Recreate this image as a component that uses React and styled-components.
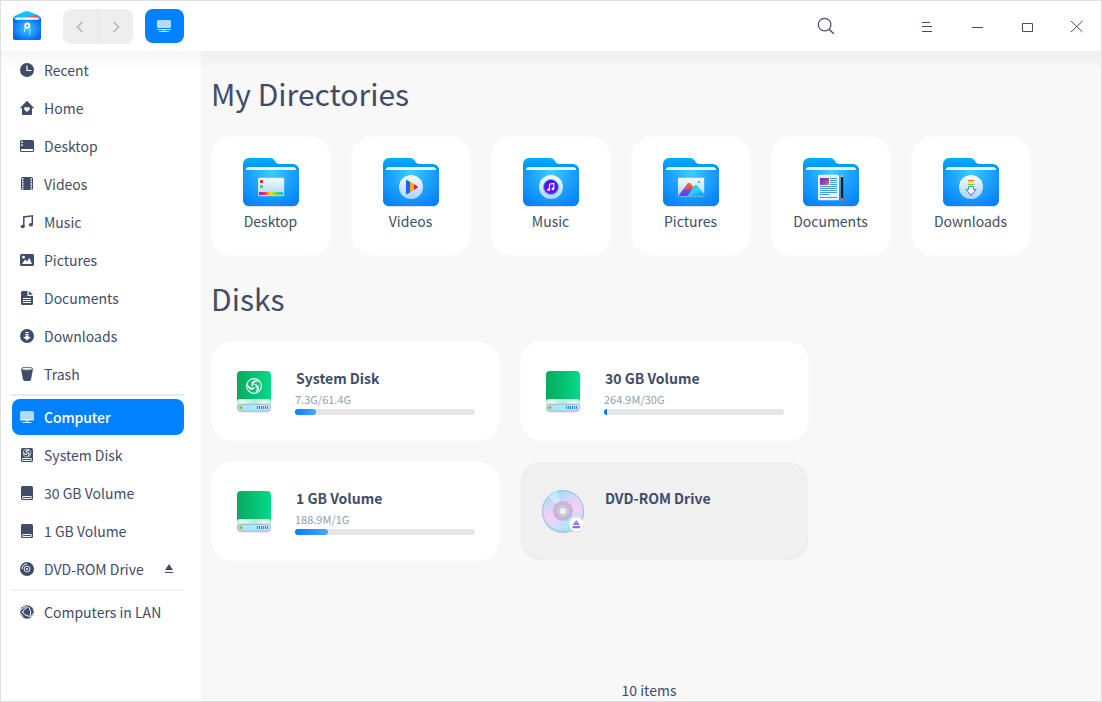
import React from "react";
import styled, { createGlobalStyle, css } from "styled-components";

const INK = "#414d68";
const BLUE = "#0081ff";

const GlobalStyle = createGlobalStyle`
  *, *::before, *::after { box-sizing: border-box; }
  body {
    margin: 0;
    color: ${INK};
    font-family: "Noto Sans CJK SC", "Noto Sans", sans-serif;
    font-size: 14px;
  }
  svg { display: block; }
`;

const Window = styled.div`
  display: flex;
  flex-direction: column;
  width: 1102px;
  height: 702px;
  border: 1px solid #dfdfdf;
  background: #f8f8f8;
  overflow: hidden;
`;

const TitleBar = styled.header`
  position: relative;
  z-index: 1;
  flex: none;
  display: flex;
  align-items: center;
  height: 50px;
  padding: 0 16px 0 11px;
  background: #fff;

  &::after {
    content: "";
    position: absolute;
    left: 0;
    right: 0;
    top: 100%;
    height: 20px;
    background: linear-gradient(rgba(0, 0, 0, 0.035), rgba(0, 0, 0, 0));
    pointer-events: none;
  }
`;

const NavGroup = styled.div`
  display: flex;
  width: 70px;
  height: 35px;
  margin: 1px 0 0 20px;
  border-radius: 8px;
  background: #eeeeee;
  overflow: hidden;
`;

const NavButton = styled.button`
  flex: 1;
  display: flex;
  align-items: center;
  justify-content: center;
  padding: 0;
  border: 0;
  background: none;
  & + & { border-left: 1px solid #e8e8e8; }
`;

const LocationButton = styled.button`
  display: flex;
  align-items: center;
  justify-content: center;
  width: 39px;
  height: 34px;
  margin-left: 12px;
  padding: 0 1px 0 0;
  border: 0;
  border-radius: 8px;
  background: ${BLUE};
`;

const SearchButton = styled.button`
  margin-left: auto;
  margin-right: 84px;
  padding: 0;
  border: 0;
  background: none;
`;

const WindowControls = styled.div`
  display: flex;
  gap: 34px;
`;

const Control = styled.button`
  width: 16px;
  height: 16px;
  padding: 0;
  border: 0;
  background: none;
`;

const Body = styled.div`
  flex: 1;
  display: flex;
  min-height: 0;
`;

const Sidebar = styled.nav`
  flex: none;
  display: flex;
  flex-direction: column;
  width: 200px;
  padding: 1px 17px 0 11px;
  background: #fff;
`;

const SideList = styled.ul`
  display: flex;
  flex-direction: column;
  gap: 2px;
  margin: 0;
  padding: 0;
  list-style: none;
`;

const SideItem = styled.li`
  display: flex;
  align-items: center;
  gap: 9px;
  height: 36px;
  padding: 0 7px 0 7px;
  border-radius: 8px;
  line-height: 36px;
  white-space: nowrap;
  ${(p) =>
    p.$active &&
    css`
      background: ${BLUE};
      color: #fff;
      font-weight: 500;
      letter-spacing: -0.1px;
    `}
`;

const SideLabel = styled.span`
  flex: 1;
`;

const Separator = styled.hr`
  width: 173px;
  height: 2px;
  margin: ${(p) => p.$margin};
  border: 0;
  background: ${(p) => p.$color};
`;

const Main = styled.main`
  flex: 1;
  display: flex;
  flex-direction: column;
  padding: 17px 0 0 11px;
`;

const Heading = styled.h1`
  height: 50px;
  margin: ${(p) => p.$top || 0}px 0 19px -1px;
  font-size: 30px;
  font-weight: 400;
  line-height: 50px;
`;

const DirectoryRow = styled.div`
  display: flex;
  gap: 22px;
`;

const DirectoryCard = styled.div`
  display: flex;
  flex-direction: column;
  align-items: center;
  width: 118px;
  height: 118px;
  padding-top: 21px;
  border-radius: 20px;
  background: #fff;
  box-shadow: 0 0 0 1px rgba(255, 255, 255, 0.4);
`;

const DirectoryName = styled.span`
  margin-right: 1px;
  line-height: 22px;
`;

const DiskGrid = styled.div`
  display: grid;
  grid-template-columns: repeat(2, 287px);
  grid-auto-rows: 98px;
  gap: 22px;
`;

const DiskCard = styled.div`
  display: flex;
  padding: 25px 0 0 18px;
  border-radius: 20px;
  background: ${(p) => (p.$muted ? "#f0f0f0" : "#fff")};
  box-shadow: ${(p) => (p.$muted ? "inset 0 0 0 1px #ececec" : "0 0 0 1px rgba(255, 255, 255, 0.4)")};
`;

const DiskInfo = styled.div`
  display: flex;
  flex-direction: column;
  margin: -1px 0 0 17px;
`;

const DiskName = styled.span`
  margin-left: 1px;
  font-weight: 700;
  line-height: 24px;
`;

const DiskUsage = styled.span`
  font-size: 11px;
  line-height: 16px;
  margin-top: 1px;
  color: #8aa1b4;
`;

const Meter = styled.div`
  width: 180px;
  height: 6px;
  margin-top: 2px;
  border-radius: 3px;
  background: #e5e5e5;
  overflow: hidden;
`;

const MeterFill = styled.div`
  height: 100%;
  border-radius: ${(p) => (p.$tiny ? "0" : "0 3px 3px 0")};
  background: ${(p) => (p.$tiny ? BLUE : `linear-gradient(90deg, ${BLUE}, #4aa5ff)`)};
`;

const StatusBar = styled.footer`
  margin: auto 0 -1px -11px;
  padding-right: 4px;
  line-height: 24px;
  text-align: center;
`;

/* ---------- title bar drawings ---------- */

const AppLogo = () => (
  <svg width="31" height="32" viewBox="0 0 31 32">
    <defs>
      <linearGradient id="lgBack" x1="0" y1="0" x2="0" y2="1">
        <stop offset="0" stopColor="#12d0ff" />
        <stop offset="1" stopColor="#0a8cf5" />
      </linearGradient>
      <radialGradient id="lgFront" cx=".5" cy=".5" r=".65">
        <stop offset="0" stopColor="#3fc4ff" />
        <stop offset=".6" stopColor="#1489ff" />
        <stop offset="1" stopColor="#0651ec" />
      </radialGradient>
      <linearGradient id="lgRed" x1="0" x2="1">
        <stop offset="0" stopColor="#ff8a9e" />
        <stop offset="1" stopColor="#f5365c" />
      </linearGradient>
    </defs>
    <path d="M1 9.500Q1 6.500 3.500 5.400L12.500 1.600Q15 .6 17.500 1.600L26.500 5.400Q29 6.500 29 9.500V20H1Z" fill="url(#lgBack)" />
    <path d="M3 8.500L24 5.200Q26.300 5 26.700 7V10H3Z" fill="url(#lgRed)" />
    <path d="M3 9.500Q3 7.500 5.500 7.500H24.500Q27 7.500 27 9.500V12H3Z" fill="#fff" />
    <path d="M1 7.500Q1.500 9.700 4 9.700H26Q28.500 9.700 29 7.500V27.500Q29 30 26.500 30H3.500Q1 30 1 27.500Z" fill="url(#lgFront)" />
    <path d="M12.700 17.500V22" stroke="#bfe6ff" strokeWidth="1.200" />
    <path d="M17.800 18V25" stroke="#7fcaff" strokeWidth="1.500" />
    <circle cx="15.300" cy="15.600" r="2.100" fill="#2496ff" stroke="#fff" strokeWidth="1.900" />
  </svg>
);

const Chevron = ({ right }) => (
  <svg width="12" height="14" viewBox="0 0 12 14" fill="none" stroke="#b0b2bb" strokeWidth="1.400">
    <path d={right ? "M3.500 2 L8.700 7 L3.500 12" : "M8.500 2 L3.300 7 L8.500 12"} />
  </svg>
);

const ComputerIcon = () => (
  <svg width="16" height="16" viewBox="0 0 16 16">
    <path d="M1 3.500Q1 2 2.500 2H13.500Q15 2 15 3.500V10H1Z" fill="#fff" fillOpacity=".7" />
    <path d="M1 10H15V10.500Q15 11.500 14 11.500H2Q1 11.500 1 10.500Z" fill="#fff" fillOpacity=".85" />
    <path d="M6.500 11.500h3v1.300h-3zM3.500 13h9v1h-9z" fill="#fff" fillOpacity=".75" />
  </svg>
);

const SmallComputer = () => (
  <svg width="16" height="16" viewBox="0 0 16 16">
    <rect x="1" y="2" width="14" height="8" rx="1.300" fill="#fff" fillOpacity=".7" />
    <path d="M1 11.500H15M3 13.500H13" stroke="#fff" strokeOpacity=".75" />
    <path d="M6.500 12h3v1h-3z" fill="#fff" fillOpacity=".5" />
  </svg>
);

const SearchIcon = () => (
  <svg width="18" height="18" viewBox="0 0 18 18" fill="none" stroke={INK} strokeWidth="1.200">
    <circle cx="7.600" cy="7.600" r="6.300" />
    <path d="M12.200 12.200 L16.700 16.700" strokeWidth="1.400" />
  </svg>
);

const controlPaths = {
  menu: "M3 4.500h8M3 8.500h10M3 13.500h10",
  minimize: "M3 9.500h11",
  maximize: "M3.500 5.500h10v8h-10z",
  close: "M2 3 L13.500 14 M13.500 3 L2 14",
};

const ControlIcon = ({ name }) => (
  <svg width="16" height="16" viewBox="0 0 16 16" fill="none" stroke={INK} strokeWidth="1">
    <path d={controlPaths[name]} />
  </svg>
);

/* Three curved blades turning round a centre, inside a thin ring. */
const Swirl = ({ cx, cy, scale = 1 }) => (
  <g transform={`translate(${cx} ${cy}) scale(${scale})`} fill="#fff">
    <circle r="7.400" fill="none" stroke="#fff" strokeWidth="1.100" />
    {[0, 120, 240].map((angle) => (
      <path
        key={angle}
        transform={`rotate(${angle})`}
        d="M5.500 -4.800C0 -8 -5.500 -3.500 -.8 1.800C-2.600 -2.300 .5 -4.400 5.500 -4.800z"
      />
    ))}
  </g>
);

/* ---------- sidebar drawings ---------- */

const DiskGlyph = ({ swirl }) => (
  <>
    <path d="M2 2.500Q2 1 3.500 1h9Q14 1 14 2.500v11q0 1.500-1.500 1.500h-9Q2 15 2 13.500z" />
    <rect x="3.500" y="11.500" width="9" height="2" rx=".6" fill="none" stroke="#fff" strokeWidth="1" />
    {swirl && <Swirl cx={8} cy={6} scale={0.54} />}
  </>
);

const glyphs = {
  recent: (
    <>
      <circle cx="8" cy="8" r="7" />
      <path d="M8 3.500V8.500H12.500" fill="none" stroke="#fff" strokeWidth="1.200" />
    </>
  ),
  home: (
    <>
      <path d="M8 .8L15.300 8.200H13V14Q13 15 12 15H4Q3 15 3 14V8.200H.7z" />
      <path d="M8 12L5.300 9.400Q4.600 8 5.700 7.200Q7 6.600 8 7.800Q9 6.600 10.300 7.200Q11.400 8 10.700 9.400z" fill="#fff" />
    </>
  ),
  desktop: (
    <>
      <rect x="1" y="2" width="14" height="12" rx="1.500" />
      <path d="M2 11h12v1.300q0 .7-.7.7H2.700Q2 13 2 12.300zM2 3.500h2v1.300H2zM2 6.500h2v1.300H2z" fill="#fff" />
    </>
  ),
  videos: (
    <>
      <rect x="2" y="1" width="12" height="13" rx="1.500" />
      <path
        d="M3 3h1.500M3 5.500h1.500M3 8h1.500M3 10.500h1.500M3 12.800h1.500M11.500 3H13M11.500 5.500H13M11.500 8H13M11.500 10.500H13M11.500 12.800H13"
        stroke="#fff"
        strokeWidth="1.300"
      />
    </>
  ),
  music: (
    <>
      <path d="M4.800 12.500V3L13.300 1.800V10.500" fill="none" stroke={INK} strokeWidth="1.500" />
      <ellipse cx="3.700" cy="12.500" rx="2.100" ry="1.800" />
      <ellipse cx="11.900" cy="10.700" rx="2.100" ry="1.800" />
    </>
  ),
  pictures: (
    <>
      <rect x="1" y="2" width="14" height="12" rx="1.500" />
      <path d="M3 12L6 7.500L8 9.500L10.300 6L13 12z" fill="#fff" />
      <circle cx="4.500" cy="5.200" r="1.400" fill="#fff" />
    </>
  ),
  documents: (
    <>
      <path d="M2 2.500Q2 1 3.500 1H8.500V6H14V13.500Q14 15 12.500 15H3.500Q2 15 2 13.500z" />
      <path d="M9.800 1L14 4.800H9.800z" />
      <path d="M4 8.500H12M4 10.500H12M4 12.500H12" stroke="#fff" strokeWidth="1" />
    </>
  ),
  downloads: (
    <>
      <circle cx="8" cy="8" r="7" />
      <path d="M6.300 4.500H9.700M6.300 6.500H9.700" stroke="#fff" strokeWidth="1" />
      <path d="M6.300 7.500H9.700V9H11.800L8 12.500L4.200 9H6.300z" fill="#fff" />
    </>
  ),
  trash: (
    <>
      <path d="M2 3L4 13.600Q4.300 15 5.700 15H10.300Q11.700 15 12 13.600L14 3z" />
      <ellipse cx="8" cy="2.800" rx="5.600" ry="1.500" fill="#eef0f3" stroke={INK} strokeWidth=".8" />
    </>
  ),
  disk: <DiskGlyph />,
  systemDisk: <DiskGlyph swirl />,
  optical: (
    <>
      <circle cx="8" cy="8" r="7" />
      <circle cx="8" cy="8" r="2.900" fill="none" stroke="#fff" strokeWidth=".9" />
      <circle cx="8" cy="8" r="1" fill="#fff" />
      <path d="M3 8A5 5 0 0 1 8 3" fill="none" stroke="#fff" strokeWidth="1" />
    </>
  ),
  network: (
    <>
      <circle cx="8" cy="8" r="6.800" />
      <path
        d="M8.800 3Q4.200 5.500 3.400 8.500M3 7.500Q4.500 11 10.500 12.600M9.800 2.800Q13 7.500 11 12.800M2 9.800Q2.800 11.500 4 12.800M2.500 5.500Q4.800 2.900 7.600 2.400M13.700 9.500Q13.200 11.500 12 13"
        fill="none"
        stroke="#fff"
        strokeWidth="1"
      />
    </>
  ),
};

const Glyph = ({ name }) => (
  <svg width="16" height="16" viewBox="0 0 16 16" fill={INK}>
    {glyphs[name]}
  </svg>
);

const EjectIcon = () => (
  <svg width="16" height="16" viewBox="0 0 16 16" fill={INK}>
    <path d="M8 3L12 9H4zM4 11h8v1H4z" />
  </svg>
);

/* ---------- folder drawings ---------- */

const FolderDefs = () => (
  <svg width="0" height="0" style={{ position: "absolute" }}>
    <defs>
      <linearGradient id="fdBack" x1="0" y1="0" x2="0" y2="1">
        <stop offset="0" stopColor="#00b0ff" />
        <stop offset=".3" stopColor="#0086f8" />
      </linearGradient>
      <radialGradient id="fdFront" cx="28" cy="14" r="38" gradientUnits="userSpaceOnUse">
        <stop offset="0" stopColor="#41ccff" />
        <stop offset=".5" stopColor="#1fa5fb" />
        <stop offset="1" stopColor="#0683fa" />
      </radialGradient>
      <linearGradient id="fdPlate" x1="0" y1="0" x2="0" y2="1">
        <stop offset="0" stopColor="#f8fbff" />
        <stop offset="1" stopColor="#a9d3fb" />
      </linearGradient>
      <linearGradient id="fdRainbow">
        <stop offset="0" stopColor="#a41cf0" />
        <stop offset=".22" stopColor="#f0286e" />
        <stop offset=".48" stopColor="#f6e000" />
        <stop offset=".75" stopColor="#4fd860" />
        <stop offset="1" stopColor="#20b8f8" />
      </linearGradient>
      <linearGradient id="fdWarm" x1="0" y1="0" x2="0" y2="1">
        <stop offset="0" stopColor="#ff6a28" />
        <stop offset=".4" stopColor="#f2503c" />
        <stop offset=".55" stopColor="#6a4af8" />
        <stop offset="1" stopColor="#5a3ff0" />
      </linearGradient>
      <linearGradient id="fdCool" x1="0" y1="0" x2=".6" y2="1">
        <stop offset="0" stopColor="#18b8ff" />
        <stop offset=".6" stopColor="#22dcff" />
        <stop offset="1" stopColor="#1aa0ff" />
      </linearGradient>
      <linearGradient id="fdPhoto" x1="0" y1="0" x2="1" y2="1">
        <stop offset="0" stopColor="#5a20ff" />
        <stop offset=".6" stopColor="#a04a9c" />
        <stop offset="1" stopColor="#f07850" />
      </linearGradient>
      <linearGradient id="fdPurple" x1="0" y1="0" x2="0" y2="1">
        <stop offset="0" stopColor="#3c14e8" />
        <stop offset="1" stopColor="#7a12ff" />
      </linearGradient>
      <linearGradient id="fdArrow" x1="0" y1="0" x2="0" y2="1">
        <stop offset="0" stopColor="#16b8d8" />
        <stop offset="1" stopColor="#8a2af0" />
      </linearGradient>
    </defs>
  </svg>
);

const RoundPlate = () => <circle cx="28" cy="29" r="12" fill="url(#fdPlate)" />;

const emblems = {
  Desktop: (
    <>
      <rect x="15" y="19.700" width="26.200" height="18.500" rx="1.500" fill="url(#fdPlate)" />
      <rect x="17" y="22" width="3" height="3" rx=".6" fill="#d8283c" />
      <rect x="17" y="27" width="3" height="3" rx=".6" fill="#6cc02c" />
      <rect x="16" y="34" width="24" height="3" fill="url(#fdRainbow)" />
    </>
  ),
  Videos: (
    <>
      <RoundPlate />
      <path d="M23 23Q23 21.500 24.300 22.200L27 23.700V34.400L24.300 36Q23 36.500 23 35z" fill="#1468ff" />
      <path d="M27 23.700L31 26V32L27 34.400z" fill="#ffae00" />
      <path d="M31 26L34.700 28.400Q35.400 29 34.700 29.700L31 32z" fill="#f0146e" />
    </>
  ),
  Music: (
    <>
      <RoundPlate />
      <circle cx="28" cy="29" r="7.500" fill="url(#fdPurple)" stroke="#2fc0f4" strokeWidth=".9" />
      <path d="M26.500 31.800V26.300L30.800 25.500V30.700" fill="none" stroke="#fff" strokeWidth="1.100" />
      <circle cx="25.600" cy="31.800" r="1.300" fill="#fff" />
      <circle cx="29.900" cy="30.900" r="1.300" fill="#fff" />
    </>
  ),
  Pictures: (
    <>
      <rect x="15" y="19.700" width="26.200" height="18.800" rx="1" fill="url(#fdPlate)" />
      <path d="M15.300 38L24.500 25.500Q26 24 27.500 25.500L32 31L27 38z" fill="url(#fdWarm)" />
      <path d="M24.300 38L31.800 27.500Q33 26 34.200 27.500L41 36V38z" fill="url(#fdCool)" />
      <circle cx="36" cy="24" r="1.100" fill="#2a9cf4" />
    </>
  ),
  Documents: (
    <>
      <rect x="15" y="16.800" width="21" height="25.400" rx="1.500" fill="#eaf5ff" />
      <rect x="17" y="20" width="9" height="7" fill="url(#fdPhoto)" />
      <path
        d="M27 20.500H34M27 22.500H34M27 24.500H34M27 26.500H34M17 28.500H34M17 30.500H34M17 32.500H34M17 34.500H34M17 36.500H26M17 39.500H34"
        stroke="#2a94e4"
        strokeWidth=".9"
      />
      <path d="M39 16L40.200 19H37.800z" fill="#f6c78c" />
      <path d="M37.900 19H40.200V41H37.900z" fill="#171a22" />
      <path d="M38 40H40.200V43H38z" fill="#f05a48" />
    </>
  ),
  Downloads: (
    <>
      <RoundPlate />
      <path d="M25 22.500H31" stroke="#ff5a3c" strokeWidth="1" />
      <path d="M25 24.500H31" stroke="#f0d814" strokeWidth="1.200" />
      <path d="M25 26.500H31" stroke="#6cd83c" strokeWidth="1" />
      <path d="M25.500 28.500H30.500V31.500H33L28 37.300L23 31.500H25.500z" fill="#fff" stroke="url(#fdArrow)" strokeWidth="1" />
    </>
  ),
};

const FolderIcon = ({ name }) => (
  <svg width="56" height="52" viewBox="0 0 56 52">
    <rect x="1" y="40" width="54" height="9.300" rx="6" fill="#0a3a80" fillOpacity=".14" />
    <path
      d="M0 6A6 6 0 0 1 6 0H27Q30 0 31.500 2.200L33 4.600Q34 6 36 6H50A6 6 0 0 1 56 12V42A6 6 0 0 1 50 48H6A6 6 0 0 1 0 42z"
      fill="url(#fdBack)"
    />
    <path d="M2.700 12.500Q2.700 9 6 9H50Q53.300 9 53.300 12.500z" fill="#e9f6ff" />
    <path d="M0 12H56V42A6 6 0 0 1 50 48H6A6 6 0 0 1 0 42z" fill="url(#fdFront)" />
    {emblems[name]}
  </svg>
);

/* ---------- disk drawings ---------- */

const DriveIcon = ({ system }) => (
  <svg width="48" height="48" viewBox="0 0 48 48">
    <defs>
      <linearGradient id="dvGreen">
        <stop offset="0" stopColor="#0aaa5c" />
        <stop offset=".5" stopColor="#04c272" />
        <stop offset="1" stopColor="#04d98a" />
      </linearGradient>
      <linearGradient id="dvEdge">
        <stop offset="0" stopColor="#c4f0da" />
        <stop offset=".15" stopColor="#e6faf0" />
        <stop offset=".5" stopColor="#b8ecd4" />
        <stop offset=".85" stopColor="#e6faf0" />
        <stop offset="1" stopColor="#b8f0d4" />
      </linearGradient>
      <linearGradient id="dvBase">
        <stop offset="0" stopColor="#ccd2f0" />
        <stop offset=".4" stopColor="#9ceefa" />
        <stop offset="1" stopColor="#dcdff6" />
      </linearGradient>
    </defs>
    <rect x="7.500" y="38" width="33" height="8" rx="4" fill="#3a3a70" fillOpacity=".13" />
    <path d="M7 8Q7 4 11 4H37Q41 4 41 8V40H7z" fill="url(#dvGreen)" />
    <path d="M7 37V34Q7.500 32 10 32H38Q40.500 32 41 34V41H7z" fill="url(#dvEdge)" />
    <rect x="7.500" y="37.300" width="33" height="6.700" rx="3" fill="url(#dvBase)" stroke="#aaaedc" strokeWidth="1" />
    <circle cx="11" cy="40.500" r="1.500" fill="#5bd818" />
    <path d="M27.500 39V42M29.500 39V42M31.500 39V42M33.500 39V42M35.500 39V42M37.500 39V42" stroke="#1a90ff" strokeWidth="1.100" />
    {system && <Swirl cx={24} cy={19} />}
  </svg>
);

const DiscIcon = () => (
  <svg width="48" height="48" viewBox="0 0 48 48">
    <defs>
      <linearGradient id="dsFace" x1=".3" y1="0" x2=".7" y2="1">
        <stop offset="0" stopColor="#8edcf8" />
        <stop offset=".25" stopColor="#bcdcfa" />
        <stop offset=".5" stopColor="#fad0f4" />
        <stop offset=".72" stopColor="#cce0fa" />
        <stop offset="1" stopColor="#8cf0fc" />
      </linearGradient>
      <linearGradient id="dsFace2" x1="0" y1=".7" x2="1" y2=".25">
        <stop offset="0" stopColor="#facef4" />
        <stop offset=".5" stopColor="#d8d8f8" stopOpacity=".2" />
        <stop offset="1" stopColor="#f8c8f4" />
      </linearGradient>
      <linearGradient id="dsEject" x1="0" y1="0" x2="0" y2="1">
        <stop offset="0" stopColor="#b08ae8" />
        <stop offset="1" stopColor="#7a6ee0" />
      </linearGradient>
    </defs>
    <circle cx="24" cy="25.200" r="21.200" fill="#000" fillOpacity=".14" />
    <circle cx="24" cy="24" r="21" fill="url(#dsFace)" />
    <circle cx="24" cy="24" r="20.500" fill="url(#dsFace2)" fillOpacity=".45" stroke="#7cc4f0" strokeWidth=".9" />
    <path d="M24 24L9 9.500A21 21 0 0 1 18 4z" fill="#fff" fillOpacity=".35" />
    <path d="M24 24L40 37A21 21 0 0 1 27 44.500z" fill="#8ff4ff" fillOpacity=".5" />
    <circle cx="24" cy="24" r="8" fill="none" stroke="#c9aed0" strokeWidth="4" strokeOpacity=".9" />
    <circle cx="24" cy="24" r="6" fill="#c4cbd8" />
    <circle cx="24" cy="24" r="3.200" fill="#eef0f2" />
    <circle cx="37.300" cy="37.900" r="7.400" fill="#000" fillOpacity=".1" />
    <circle cx="37.300" cy="37.300" r="7.200" fill="#fff" />
    <path d="M37.300 33L41 38H33.600zM33.600 39H41V41.200H33.600z" fill="url(#dsEject)" />
  </svg>
);

/* ---------- data ---------- */

const places = [
  ["recent", "Recent"],
  ["home", "Home"],
  ["desktop", "Desktop"],
  ["videos", "Videos"],
  ["music", "Music"],
  ["pictures", "Pictures"],
  ["documents", "Documents"],
  ["downloads", "Downloads"],
  ["trash", "Trash"],
];

const devices = [
  ["systemDisk", "System Disk"],
  ["disk", "30 GB Volume"],
  ["disk", "1 GB Volume"],
];

const directories = ["Desktop", "Videos", "Music", "Pictures", "Documents", "Downloads"];

const disks = [
  { name: "System Disk", usage: "7.3G/61.4G", fill: 21, system: true },
  { name: "30 GB Volume", usage: "264.9M/30G", fill: 3 },
  { name: "1 GB Volume", usage: "188.9M/1G", fill: 33 },
  { name: "DVD-ROM Drive", optical: true },
];

const Place = ({ icon, label }) => (
  <SideItem>
    <Glyph name={icon} />
    <SideLabel>{label}</SideLabel>
  </SideItem>
);

const Disk = ({ disk }) => (
  <DiskCard $muted={disk.optical}>
    {disk.optical ? <DiscIcon /> : <DriveIcon system={disk.system} />}
    <DiskInfo>
      <DiskName>{disk.name}</DiskName>
      {disk.usage && (
        <>
          <DiskUsage>{disk.usage}</DiskUsage>
          <Meter>
            <MeterFill $tiny={disk.fill < 6} style={{ width: disk.fill }} />
          </Meter>
        </>
      )}
    </DiskInfo>
  </DiskCard>
);

export default function App() {
  return (
    <Window>
      <GlobalStyle />
      <FolderDefs />
      <TitleBar>
        <AppLogo />
        <NavGroup>
          <NavButton aria-label="Back"><Chevron /></NavButton>
          <NavButton aria-label="Forward"><Chevron right /></NavButton>
        </NavGroup>
        <LocationButton aria-label="Computer"><SmallComputer /></LocationButton>
        <SearchButton aria-label="Search"><SearchIcon /></SearchButton>
        <WindowControls>
          {["menu", "minimize", "maximize", "close"].map((name) => (
            <Control key={name} aria-label={name}><ControlIcon name={name} /></Control>
          ))}
        </WindowControls>
      </TitleBar>
      <Body>
        <Sidebar>
          <SideList>
            {places.map(([icon, label]) => <Place key={label} icon={icon} label={label} />)}
          </SideList>
          <Separator $margin="2px 0 3px -1px" $color="#ebebeb" />
          <SideList>
            <SideItem $active>
              <ComputerIcon />
              <SideLabel>Computer</SideLabel>
            </SideItem>
            {devices.map(([icon, label]) => <Place key={label} icon={icon} label={label} />)}
            <SideItem>
              <Glyph name="optical" />
              <SideLabel>DVD-ROM Drive</SideLabel>
              <EjectIcon />
            </SideItem>
          </SideList>
          <Separator $margin="2px 0 3px -1px" $color="#f1f1f1" />
          <SideList>
            <Place icon="network" label="Computers in LAN" />
          </SideList>
        </Sidebar>
        <Main>
          <Heading>My Directories</Heading>
          <DirectoryRow>
            {directories.map((name) => (
              <DirectoryCard key={name}>
                <FolderIcon name={name} />
                <DirectoryName>{name}</DirectoryName>
              </DirectoryCard>
            ))}
          </DirectoryRow>
          <Heading $top={18}>Disks</Heading>
          <DiskGrid>
            {disks.map((disk) => <Disk key={disk.name} disk={disk} />)}
          </DiskGrid>
          <StatusBar>10 items</StatusBar>
        </Main>
      </Body>
    </Window>
  );
}
